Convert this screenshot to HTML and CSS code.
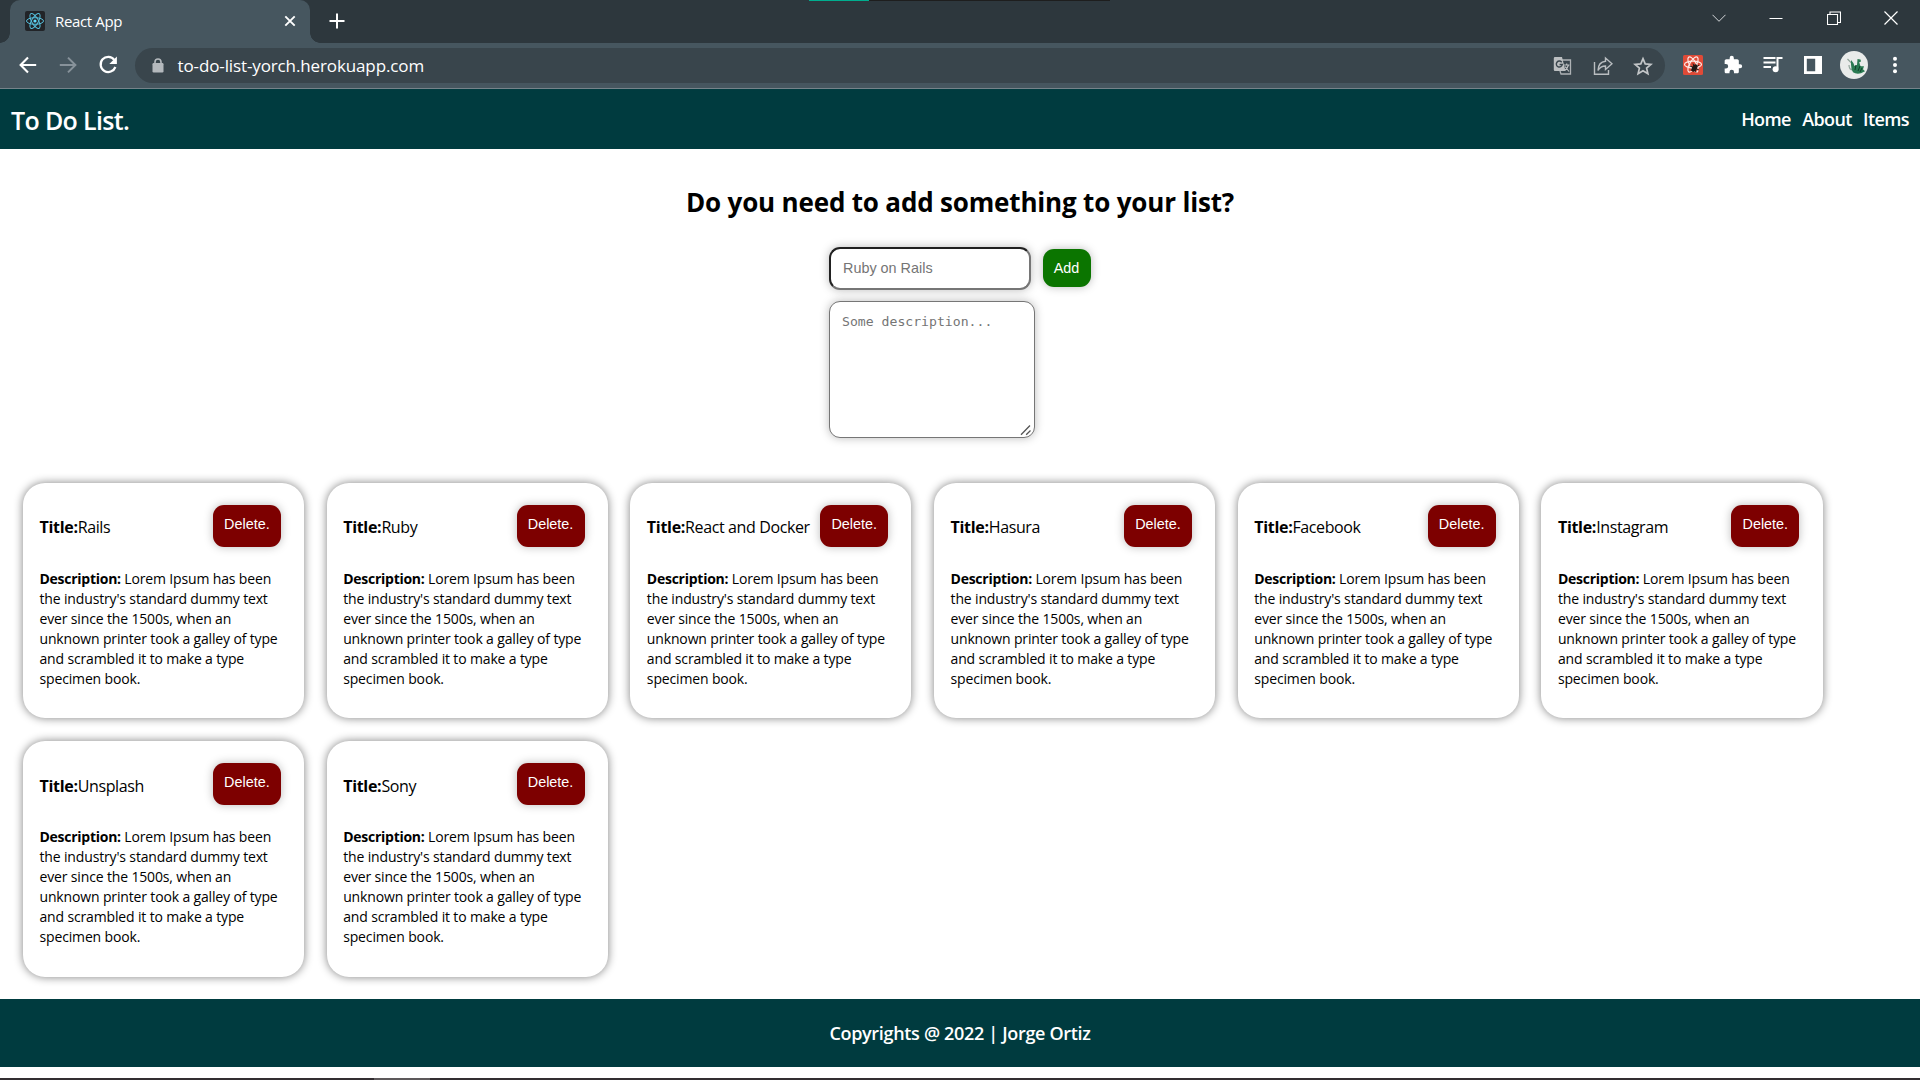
FILE: index.html
```html
<!DOCTYPE html>
<html lang="en">
<head>
<meta charset="utf-8">
<title>React App</title>
<link rel="stylesheet" href="styles.css">
</head>
<body>
<div class="tabstrip">
  <div class="progress"></div>
  <div class="tab">
    <svg class="favicon" width="20" height="20" viewBox="0 0 20 20"><rect width="20" height="20" rx="2" fill="#222428"/><g fill="none" stroke="#55bfdc" stroke-width="1"><ellipse cx="10" cy="10" rx="8.500" ry="3.300"/><ellipse cx="10" cy="10" rx="8.500" ry="3.300" transform="rotate(60 10 10)"/><ellipse cx="10" cy="10" rx="8.500" ry="3.300" transform="rotate(120 10 10)"/></g><circle cx="10" cy="10" r="1.600" fill="#61dafb"/></svg>
    <span class="tab-title">React App</span>
    <svg class="tab-close" width="12" height="12" viewBox="0 0 12 12"><path d="M1.300 1.300l9.400 9.400M10.700 1.300l-9.400 9.400" stroke="#fff" stroke-width="1.900"/></svg>
  </div>
  <svg class="new-tab" width="16" height="16" viewBox="0 0 16 16"><path d="M8 .5v15M.5 8h15" stroke="#fff" stroke-width="2"/></svg>
  <div class="window-controls">
    <svg width="14" height="14" viewBox="0 0 14 14"><path d="M.5 3.800L7 10.300l6.500-6.500" fill="none" stroke="#d5d8da"/></svg>
    <svg width="14" height="14" viewBox="0 0 14 14"><path d="M.5 7.500h13" stroke="#fff"/></svg>
    <svg width="14" height="14" viewBox="0 0 14 14"><path d="M.5 3.500h10v10h-10zM3 3.500v-2.500h10.500v10.500h-3" fill="none" stroke="#fff" stroke-width="1.100"/></svg>
    <svg width="14" height="14" viewBox="0 0 14 14"><path d="M.5.5l13 13M13.500.5l-13 13" stroke="#fff" stroke-width="1.200"/></svg>
  </div>
</div>
<div class="toolbar">
  <div class="nav-buttons">
    <svg width="24" height="24" viewBox="0 0 24 24"><path d="M20.200 12H4.800M12 4.600L4.600 12l7.400 7.400" fill="none" stroke="#fff" stroke-width="2.100"/></svg>
    <svg width="24" height="24" viewBox="0 0 24 24"><path d="M3.800 12h15.400M12 4.600l7.400 7.400-7.400 7.400" fill="none" stroke="#87929a" stroke-width="2"/></svg>
    <svg width="24" height="24" viewBox="0 0 24 24"><path d="M18.300 6.800A7.600 7.600 0 1 0 19.400 14" fill="none" stroke="#fff" stroke-width="2.200"/><path d="M20.900 3.400v7.600h-7.600z" fill="#fff"/></svg>
  </div>
  <div class="omnibox">
    <svg class="lock" width="12" height="15" viewBox="0 0 12 15"><rect x=".5" y="5" width="11" height="9.500" rx="1.200" fill="#b4b9bd"/><path d="M3 5.500V4a3 3 0 0 1 6 0v1.500" fill="none" stroke="#b4b9bd" stroke-width="1.600"/></svg>
    <span class="url">to-do-list-yorch.herokuapp.com</span>
    <div class="page-actions">
      <svg width="20" height="20" viewBox="0 0 20 20"><path d="M9 4h8.500v14H8l-1-3" fill="none" stroke="#aeb2b5" stroke-width="1.300"/><path d="M2 1h7l3.500 14H2A1.200 1.200 0 0 1 .8 13.800V2.200A1.200 1.200 0 0 1 2 1z" fill="#bcbfc1"/><path d="M8.700 6.200A3 3 0 1 0 9.300 8.500H6.600" fill="none" stroke="#39454c" stroke-width="1.400"/><path d="M11 9h5.500M13.700 7.500V9M15.500 9q-1 3.500-4 5.500M12 10.500l4 5" fill="none" stroke="#bcbfc1" stroke-width="1.200"/></svg>
      <svg width="20" height="20" viewBox="0 0 20 20"><path d="M1.500 6v12.200H15.500V14" fill="none" stroke="#b9bdc0" stroke-width="1.400"/><path d="M5 14.500Q5.300 6 12.500 5.300V2l6.500 5.800-6.500 5.700V10Q7.500 10 5 14.500z" fill="none" stroke="#b9bdc0" stroke-width="1.400"/></svg>
      <svg width="20" height="20" viewBox="0 0 20 20"><path d="M10 2.600l2.200 5.300 5.700.5-4.300 3.700 1.300 5.600-4.900-3-4.900 3 1.300-5.600L2.100 8.400l5.700-.5z" fill="none" stroke="#c3c6c8" stroke-width="1.700"/></svg>
    </div>
  </div>
  <div class="extensions">
    <svg width="20" height="20" viewBox="0 0 20 20"><rect width="20" height="20" rx="1.500" fill="#e04a37"/><g fill="none" stroke="#ffe9e5" stroke-width="1.200"><ellipse cx="10" cy="9.500" rx="8.500" ry="3.300"/><ellipse cx="10" cy="9.500" rx="8.500" ry="3.300" transform="rotate(60 10 9.500)"/><ellipse cx="10" cy="9.500" rx="8.500" ry="3.300" transform="rotate(120 10 9.500)"/></g><ellipse cx="11.500" cy="13" rx="2.500" ry="4" transform="rotate(30 11.500 13)" fill="#241815"/><path d="M7 11l9 4M8 15.500l8-5.500M10 8.500l3 9" stroke="#241815"/></svg>
    <svg width="20" height="20" viewBox="0 0 24 24"><path d="M20.500 11H19V7c0-1.100-.9-2-2-2h-4V3.500a2.500 2.500 0 0 0-5 0V5H4c-1.100 0-2 .9-2 2v3.800h1.500a2.700 2.700 0 0 1 0 5.400H2V20c0 1.100.9 2 2 2h3.800v-1.500a2.700 2.700 0 0 1 5.400 0V22H17c1.100 0 2-.9 2-2v-4h1.500a2.500 2.500 0 0 0 0-5z" fill="#fff"/></svg>
    <svg width="20" height="20" viewBox="0 0 20 20"><path d="M.5 3h12M.5 7.500h12M.5 12h7.500" stroke="#fff" stroke-width="1.900"/><path d="M14.500 13.500V3h5" fill="none" stroke="#fff" stroke-width="2"/><circle cx="12.600" cy="14.300" r="3" fill="#fff"/></svg>
    <svg width="20" height="20" viewBox="0 0 20 20"><path d="M1 1h18v18H1zM3.800 3.800v12.400h8.400V3.800z" fill="#fff" fill-rule="evenodd"/></svg>
    <svg width="28" height="28" viewBox="0 0 28 28"><circle cx="14" cy="14" r="14" fill="#e9ebea"/><path d="M7.500 8l4 4 2 7M9 14q0 5 4 5" fill="none" stroke="#8fa399" stroke-width="1.200"/><path d="M11 9q3 3 3.500 6l2.500-1 .5-6 3 .5.500 2-1.800.8 1.300 4 3.500 0-1 3 2 2-4 2q-5 1-8-1-2-3-2-8z" fill="#2a7a52"/><path d="M16 14l-1 5M20 15l-2 5M22 17l-2 4" stroke="#10412a"/></svg>
    <svg width="20" height="20" viewBox="0 0 20 20" fill="#fff"><circle cx="10" cy="3.700" r="2"/><circle cx="10" cy="10" r="2"/><circle cx="10" cy="16.300" r="2"/></svg>
  </div>
</div>
<header class="site-header">
  <div class="brand">To Do List.</div>
  <nav class="menu"><a>Home</a><a>About</a><a>Items</a></nav>
</header>
<main class="content">
  <h2 class="heading">Do you need to add something to your list?</h2>
  <form class="add-form">
    <div class="form-row">
      <input class="field title-field" placeholder="Ruby on Rails">
      <button class="button add" type="button">Add</button>
    </div>
    <div class="description-wrap">
      <textarea class="field description-field" placeholder="Some description..."></textarea>
      <svg class="grip" width="12" height="12" viewBox="0 0 12 12"><path d="M1 10.800L10 1.500M6.200 10.800L10.500 6.500" stroke="#555" stroke-width="1.300"/></svg>
    </div>
  </form>
  <section class="cards" id="cards"></section>
</main>
<footer class="site-footer">Copyrights @ 2022 | Jorge Ortiz</footer>
<div class="taskbar"><div class="taskbar-item"></div></div>
<script src="app.js"></script>
</body>
</html>
```
FILE: styles.css
```css
* { box-sizing: border-box; }
body {
  margin: 0;
  width: 1920px;
  height: 1080px;
  overflow: hidden;
  display: flex;
  flex-direction: column;
  background: #fff;
  color: #000;
  font-family: "Open Sans", "Noto Sans", sans-serif;
}
svg { display: block; flex: none; }

/* browser frame */
.tabstrip {
  position: relative;
  flex: none;
  height: 43px;
  background: #2d373d;
  display: flex;
  align-items: flex-start;
  padding-left: 10px;
}
.progress {
  position: absolute;
  top: 0;
  left: 809px;
  width: 301px;
  height: 1px;
  background: linear-gradient(to right, #00ae8f 60px, #1e1e1e 60px);
}
.tab {
  position: relative;
  width: 300px;
  height: 43px;
  background: #46565f;
  border-radius: 10px 10px 0 0;
  display: flex;
  align-items: center;
  padding: 0 14px 1px 15px;
}
.tab::before,
.tab::after {
  content: "";
  position: absolute;
  bottom: 0;
  width: 10px;
  height: 10px;
}
.tab::before { left: -10px; background: radial-gradient(circle at 0 0, transparent 9.500px, #46565f 10px); }
.tab::after { right: -10px; background: radial-gradient(circle at 100% 0, transparent 9.500px, #46565f 10px); }
.tab-title {
  margin-left: 10px;
  padding-bottom: 1px;
  flex: 1;
  color: #fff;
  font-size: 15px;
  letter-spacing: -.35px;
}
.new-tab { margin: 13px 0 0 19px; }
.window-controls {
  margin: 11px 22px 0 auto;
  display: flex;
  gap: 43.400px;
}
.toolbar {
  flex: none;
  height: 46px;
  background: #46565f;
  border-bottom: 1px solid #76838a;
  display: flex;
  align-items: center;
}
.nav-buttons { display: flex; gap: 16px; padding: 0 0 1px 15.500px; width: 135px; }
.omnibox {
  width: 1530px;
  height: 35px;
  border-radius: 18px;
  background: #39454c;
  display: flex;
  align-items: center;
  padding: 0 12px 0 16.500px;
}
.url {
  margin: 0 auto 0 14px;
  color: #fff;
  font-size: 17px;
  letter-spacing: -.12px;
}
.page-actions { display: flex; gap: 20px; }
.extensions {
  flex: 1;
  display: flex;
  align-items: center;
  gap: 20px;
  padding: 0 0 1px 17.500px;
}
.extensions svg:nth-child(5) { margin: 0 -3px; }

/* page */
.site-header {
  flex: none;
  height: 60px;
  padding: 0 11px;
  background: #003b3f;
  color: #fff;
  font-weight: 600;
  display: flex;
  align-items: center;
  justify-content: space-between;
}
.brand { font-size: 25px; letter-spacing: -.65px; padding-top: 1px; }
.menu { display: flex; gap: 11.300px; font-size: 18px; letter-spacing: -.6px; padding-bottom: 1px; }
.content { flex: none; height: 850px; }
.heading {
  margin: 35px 0 26px;
  line-height: 37px;
  text-align: center;
  font-size: 26px;
  font-weight: 700;
  letter-spacing: -.17px;
}
.add-form {
  margin: 0 auto;
  width: 262px;
  display: flex;
  flex-direction: column;
  gap: 11px;
}
.form-row { display: flex; align-items: flex-start; gap: 12px; }
.field {
  display: block;
  margin: 0;
  padding: 11px 11px 11px 12px;
  border-radius: 11px;
  box-shadow: 0 0 10px #bbb;
  background: #fff;
}
.title-field {
  width: 202px;
  height: 43px;
  padding-bottom: 12px;
  border: 2px inset #767676;
  font: 14.400px "Liberation Sans", Arial, sans-serif;
}
.description-wrap { position: relative; width: 206px; }
.description-field {
  width: 206px;
  height: 137px;
  border: 1px solid #767676;
  resize: none;
  font: 13.150px/17px "DejaVu Sans Mono", monospace;
}
.grip { position: absolute; right: 3px; bottom: 2px; }
.button {
  border: 0;
  border-radius: 11px;
  padding: 0;
  color: #fff;
  box-shadow: 0 0 10px #bbb;
  font: 14.400px "Liberation Sans", Arial, sans-serif;
}
.add { width: 48px; height: 38px; margin-top: 2px; padding-right: 1px; background: #0b7500; }
.cards {
  margin: 45px 0 0 22.900px;
  display: grid;
  grid-template-columns: repeat(6, 281.200px);
  gap: 22.800px 22.500px;
}
.card {
  height: 235.400px;
  padding: 22px 23.200px 0 16.600px;
  border-radius: 22px;
  box-shadow: 0 0 10px gray;
  background: #fff;
}
.card-head {
  display: flex;
  justify-content: space-between;
  height: 42px;
  white-space: nowrap;
}
.card-title { margin: 11.400px 0 0; font-size: 16px; line-height: 22px; letter-spacing: -.38px; }
.card-title b { letter-spacing: -.3px; }
.delete { width: 68px; height: 42px; padding-bottom: 4px; background: #7d0000; flex: none; }
.card-text {
  margin: 21.600px -10px 0 0;
  font-size: 14px;
  line-height: 20px;
  letter-spacing: -.15px;
}
.card-text b { letter-spacing: -.26px; }
.site-footer {
  flex: none;
  height: 68px;
  background: #003b3f;
  color: #fff;
  display: flex;
  align-items: center;
  justify-content: center;
  font-size: 18px;
  font-weight: 600;
  letter-spacing: -.32px;
}
.taskbar { margin-top: auto; height: 2px; background: #332e31; }
.taskbar-item { margin-left: 374px; width: 56px; height: 2px; background: #5d595b; }
```
FILE: app.js
```
const titles = ["Rails", "Ruby", "React and Docker", "Hasura", "Facebook", "Instagram", "Unsplash", "Sony"];
const lines = ["Lorem Ipsum has been", "the industry's standard dummy text", "ever since the 1500s, when an", "unknown printer took a galley of type", "and scrambled it to make a type", "specimen book."];
document.getElementById("cards").innerHTML = titles.map(title => `
  <article class="card">
    <div class="card-head">
      <p class="card-title"><b>Title:</b>${title}</p>
      <button class="button delete" type="button">Delete.</button>
    </div>
    <p class="card-text"><b>Description:</b> ${lines.join("<br>")}</p>
  </article>`).join("");
```
